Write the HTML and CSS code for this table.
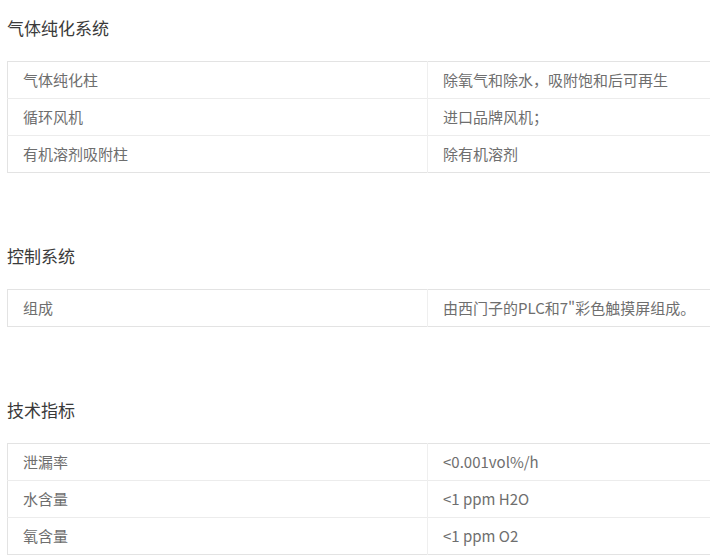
FILE: index.html
```html
<!DOCTYPE html>
<html lang="zh-CN">
<head>
<meta charset="utf-8">
<title>技术参数</title>
<link rel="stylesheet" href="styles.css">
</head>
<body>
<div class="page">
  <section class="spec">
    <h3 class="spec-title">气体纯化系统</h3>
    <table class="spec-table">
      <tr><td class="k">气体纯化柱</td><td class="v">除氧气和除水，吸附饱和后可再生</td></tr>
      <tr><td class="k">循环风机</td><td class="v">进口品牌风机；</td></tr>
      <tr><td class="k">有机溶剂吸附柱</td><td class="v">除有机溶剂</td></tr>
    </table>
  </section>
  <section class="spec">
    <h3 class="spec-title">控制系统</h3>
    <table class="spec-table">
      <tr><td class="k">组成</td><td class="v">由西门子的PLC和7"彩色触摸屏组成。</td></tr>
    </table>
  </section>
  <section class="spec">
    <h3 class="spec-title">技术指标</h3>
    <table class="spec-table">
      <tr><td class="k">泄漏率</td><td class="v">&lt;0.001vol%/h</td></tr>
      <tr><td class="k">水含量</td><td class="v">&lt;1 ppm H2O</td></tr>
      <tr><td class="k">氧含量</td><td class="v">&lt;1 ppm O2</td></tr>
    </table>
  </section>
</div>
</body>
</html>
```
FILE: styles.css
```css
html, body {
  margin: 0;
  padding: 0;
  overflow: hidden;
  background: #fff;
}
.page {
  padding-left: 7px;
  font-family: "Noto Sans CJK SC", "Noto Sans", sans-serif;
}
.spec {
  padding-bottom: 55px;
}
.spec:last-child {
  padding-bottom: 0;
}
.spec-title {
  margin: 0;
  padding: 16px 0 21px;
  font-size: 17px;
  line-height: 24px;
  font-weight: normal;
  color: #3a3a3a;
}
.spec-table {
  width: 100%;
  border-collapse: collapse;
  border: 1px solid #e3e3e3;
  border-right: none;
}
.spec-table td {
  height: 37px;
  padding: 0 0 0 15px;
  font-size: 15px;
  line-height: 20px;
  color: #6e6e6e;
  border-top: 1px solid #ececec;
  vertical-align: middle;
  box-sizing: border-box;
}
.spec-table tr:first-child td {
  border-top: 1px solid #e3e3e3;
}
.spec-table td.k {
  width: 420px;
  border-right: 1px solid #efefef;
}
```
